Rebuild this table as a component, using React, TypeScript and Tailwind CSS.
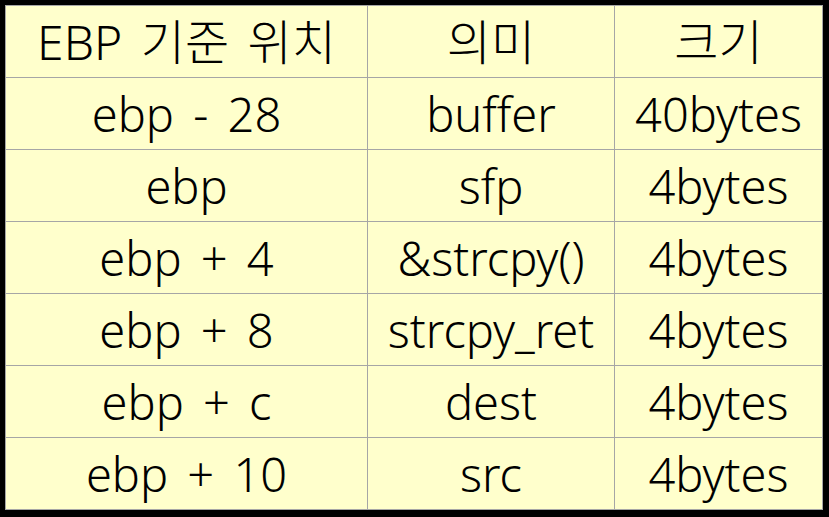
const header = ["EBP 기준 위치", "의미", "크기"];

const rows: [string, string, string][] = [
  ["ebp - 28", "buffer", "40bytes"],
  ["ebp", "sfp", "4bytes"],
  ["ebp + 4", "&strcpy()", "4bytes"],
  ["ebp + 8", "strcpy_ret", "4bytes"],
  ["ebp + c", "dest", "4bytes"],
  ["ebp + 10", "src", "4bytes"],
];

export default function App() {
  return (
    <div className="w-[829px] h-[517px] bg-black pt-[5px] pl-[5px] pr-[6px] pb-[7px] font-['Noto_Sans','Noto_Sans_CJK_KR',sans-serif] font-light text-black">
      {/* stack frame table */}
      <div className="grid grid-cols-[361px_246px_207px] grid-rows-[repeat(7,71px)] gap-px p-px bg-[#a6a6a6] w-[818px] h-[505px]">
        {header.map((h) => (
          <div
            key={h}
            className="bg-[#ffffcc] flex items-center justify-center text-[48px] leading-none whitespace-pre [word-spacing:6px]"
          >
            {h}
          </div>
        ))}
        {rows.map((r) =>
          r.map((c, j) => (
            <div
              key={r[0] + j}
              className="bg-[#ffffcc] flex items-center justify-center text-[47px] leading-none whitespace-pre [word-spacing:7px] pt-[2px]"
            >
              {c}
            </div>
          ))
        )}
      </div>
    </div>
  );
}
